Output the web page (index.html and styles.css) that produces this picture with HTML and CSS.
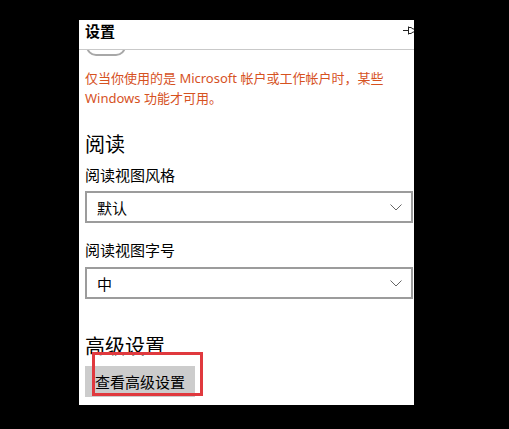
FILE: index.html
```html
<!DOCTYPE html>
<html lang="zh-CN">
<head>
<meta charset="utf-8">
<link rel="stylesheet" href="styles.css">
</head>
<body>
<div class="panel">
  <div class="header">
    <div class="title">设置</div>
    <svg class="pin" width="16" height="12" viewBox="0 0 16 12">
      <path d="M0 5.5 H5" stroke="#222" stroke-width="1" fill="none"/>
      <path d="M5.5 1.5 V9.5 M5.5 2.5 H8 L10 4 H15 M5.5 8.5 H8 L10 7 H15" stroke="#222" stroke-width="1" fill="none"/>
    </svg>
  </div>
  <div class="toggle-peek"><div class="toggle"></div></div>
  <p class="warn">仅当你使用的是 Microsoft 帐户或工作帐户时，某些<br>Windows 功能才可用。</p>
  <h2 class="section">阅读</h2>
  <div class="label">阅读视图风格</div>
  <div class="select"><span>默认</span>
    <svg class="chev" width="12" height="7" viewBox="0 0 12 7"><path d="M0.5 0.5 L6 6 L11.5 0.5" stroke="#666" stroke-width="1" fill="none"/></svg>
  </div>
  <div class="label label2">阅读视图字号</div>
  <div class="select select2"><span>中</span>
    <svg class="chev" width="12" height="7" viewBox="0 0 12 7"><path d="M0.5 0.5 L6 6 L11.5 0.5" stroke="#666" stroke-width="1" fill="none"/></svg>
  </div>
  <h2 class="section section2">高级设置</h2>
  <div class="btn">查看高级设置</div>
  <div class="highlight"></div>
</div>
</body>
</html>
```

FILE: styles.css
```css
html, body {
  margin: 0;
  padding: 0;
  background: #000;
  width: 509px;
  height: 429px;
  overflow: hidden;
}
body {
  font-family: "Noto Sans", "Noto Sans CJK SC", sans-serif;
  color: #000;
}
.panel {
  position: relative;
  margin: 20px 0 0 79px;
  width: 335px;
  height: 385px;
  background: #fff;
  overflow: hidden;
  box-sizing: border-box;
  padding: 0 1px 0 6px;
}
.header {
  height: 30px;
  margin: 0 -1px 0 -6px;
  padding: 1px 0 0 6px;
  box-sizing: border-box;
  border-bottom: 1px solid #c9c9c9;
  display: flex;
  justify-content: space-between;
  align-items: flex-start;
}
.title {
  font-family: "Noto Sans CJK SC", sans-serif;
  font-size: 15px;
  line-height: 20px;
  font-weight: 700;
}
.pin {
  margin-top: 4px;
  margin-right: -5px;
}
.toggle-peek {
  height: 6px;
  overflow: hidden;
  margin-left: 1px;
}
.toggle {
  width: 40px;
  height: 20px;
  box-sizing: border-box;
  border: 2px solid #a8a8a8;
  border-radius: 10px;
  margin-top: -14px;
}
.warn {
  margin: 13px 0 0;
  font-size: 13px;
  line-height: 19.5px;
  color: #d6521f;
}
.section {
  margin: 23px 0 0;
  font-family: "Noto Sans CJK SC", sans-serif;
  font-size: 20px;
  line-height: 26px;
  font-weight: 400;
}
.section2 {
  margin-top: 33.5px;
}
.label {
  margin-top: 7.5px;
  font-family: "Noto Sans CJK SC", sans-serif;
  font-size: 15px;
  line-height: 20px;
}
.label2 {
  margin-top: 17px;
}
.select {
  margin-top: 6.5px;
  height: 32px;
  box-sizing: border-box;
  border: 2px solid #9c9c9c;
  display: flex;
  align-items: center;
  justify-content: space-between;
  padding: 0 9px 0 10px;
  font-family: "Noto Sans CJK SC", sans-serif;
  font-size: 15px;
}
.select2 {
  margin-top: 7px;
}
.chev {
  display: block;
}
.btn {
  margin-top: 7.5px;
  width: 110px;
  height: 31px;
  box-sizing: border-box;
  background: #cccccc;
  font-family: "Noto Sans CJK SC", sans-serif;
  font-size: 15px;
  line-height: 31px;
  padding-left: 10px;
}
.highlight {
  position: absolute;
  left: 13px;
  top: 332px;
  width: 111px;
  height: 44px;
  box-sizing: border-box;
  border: 3px solid #e0393e;
}
```
